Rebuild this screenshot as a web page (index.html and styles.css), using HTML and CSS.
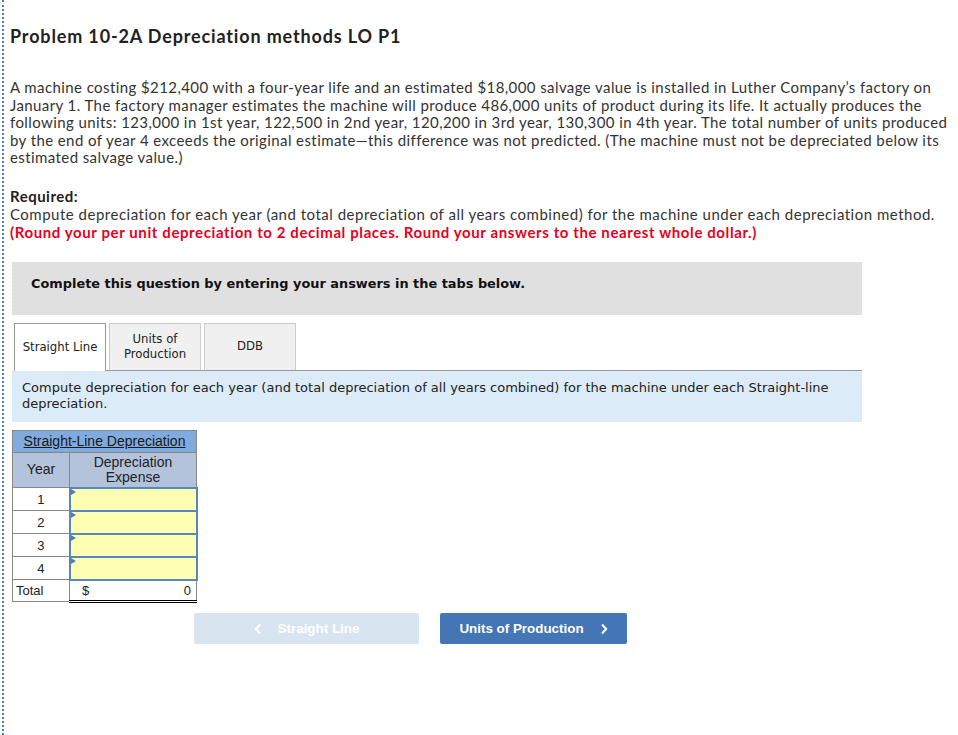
FILE: index.html
```html
<!DOCTYPE html>
<html>
<head>
<meta charset="utf-8">
<link rel="stylesheet" href="styles.css">
</head>
<body>
<div class="page">
  <h1 class="title">Problem 10-2A Depreciation methods LO P1</h1>
  <p class="intro">A machine costing $212,400 with a four-year life and an estimated $18,000 salvage value is installed in Luther Company’s factory on January 1. The factory manager estimates the machine will produce 486,000 units of product during its life. It actually produces the following units: 123,000 in 1st year, 122,500 in 2nd year, 120,200 in 3rd year, 130,300 in 4th year. The total number of units produced by the end of year 4 exceeds the original estimate—this difference was not predicted. (The machine must not be depreciated below its estimated salvage value.)</p>
  <div class="required">
    <div class="req-label">Required:</div>
    <div>Compute depreciation for each year (and total depreciation of all years combined) for the machine under each depreciation method.</div>
    <div class="red">(Round your per unit depreciation to 2 decimal places. Round your answers to the nearest whole dollar.)</div>
  </div>
  <div class="instructions">Complete this question by entering your answers in the tabs below.</div>
  <div class="tabs">
    <div class="tab active">Straight Line</div>
    <div class="tab">Units of<br>Production</div>
    <div class="tab">DDB</div>
  </div>
  <div class="tab-info">Compute depreciation for each year (and total depreciation of all years combined) for the machine under each Straight-line depreciation.</div>
  <table class="sheet">
    <tr><th colspan="2" class="cap"><u>Straight-Line Depreciation</u></th></tr>
    <tr><th class="hyear">Year</th><th class="hexp">Depreciation<br>Expense</th></tr>
    <tr><td class="yr">1</td><td class="inp"><span class="flag"></span></td></tr>
    <tr><td class="yr">2</td><td class="inp"><span class="flag"></span></td></tr>
    <tr><td class="yr">3</td><td class="inp"><span class="flag"></span></td></tr>
    <tr><td class="yr">4</td><td class="inp"><span class="flag"></span></td></tr>
    <tr><td class="tot">Total</td><td class="totv"><span>$</span><span>0</span></td></tr>
  </table>
  <div class="nav">
    <div class="btn prev"><svg class="chev" width="8" height="12" viewBox="0 0 8 12"><path d="M6 1.5 L1.8 6 L6 10.5" fill="none" stroke="#fff" stroke-width="2"/></svg>Straight Line</div>
    <div class="btn next">Units of Production<svg class="chev" width="8" height="12" viewBox="0 0 8 12"><path d="M2 1.5 L6.2 6 L2 10.5" fill="none" stroke="#fff" stroke-width="2"/></svg></div>
  </div>
</div>
</body>
</html>
```
FILE: styles.css
```css
html, body { margin: 0; padding: 0; background: #fff; }
.page {
  margin-left: 2px;
  border-left: 2px dotted #4a7ebb;
  min-height: 735px;
  padding-left: 6px;
  box-sizing: border-box;
  font-family: Lato, "Liberation Sans", sans-serif;
  color: #333;
}
.title {
  margin: 0;
  padding-top: 25px;
  font-size: 18px;
  line-height: 22px;
  font-weight: 700;
  letter-spacing: 0.85px;
  color: #222;
}
.intro {
  margin: 32px 0 0;
  font-size: 15px;
  line-height: 17.5px;
  letter-spacing: 0.41px;
  width: 940px;
}
.required {
  margin-top: 20px;
  font-size: 15px;
  line-height: 18px;
  letter-spacing: 0.5px;
}
.req-label { font-weight: 700; color: #222; }
.red { color: #e8001c; font-weight: 700; letter-spacing: 0.6px; }
.instructions {
  margin: 21px 0 0 2px;
  width: 850px;
  height: 53px;
  box-sizing: border-box;
  background: #e0e0e0;
  padding: 14px 0 0 19px;
  font-family: "DejaVu Sans", Verdana, sans-serif;
  font-size: 12.9px;
  font-weight: 700;
  color: #111;
}
.tabs {
  display: flex;
  gap: 3px;
  margin: 8px 0 0 4px;
  width: 848px;
  border-bottom: 1px solid #999;
  box-sizing: border-box;
}
.tab {
  width: 92px;
  height: 47px;
  box-sizing: border-box;
  border: 1px solid #ccc;
  border-bottom: none;
  background: #f0f0f0;
  display: flex;
  align-items: center;
  justify-content: center;
  text-align: center;
  font-family: "DejaVu Sans", Verdana, sans-serif;
  font-size: 11.7px;
  line-height: 15px;
  color: #222;
}
.tab.active { background: #fff; border-color: #999; margin-bottom: -1px; height: 48px; }
.tab-info {
  margin-left: 2px;
  width: 850px;
  height: 51px;
  box-sizing: border-box;
  background: #dcebf8;
  padding: 9px 10px 0;
  font-family: "DejaVu Sans", Verdana, sans-serif;
  font-size: 13px;
  line-height: 16px;
  color: #222;
}
.sheet {
  margin: 8px 0 0 2px;
  border-collapse: collapse;
  font-family: "Liberation Sans", Arial, sans-serif;
  font-size: 13px;
  color: #222;
  border: 1px solid #999;
}
.sheet th, .sheet td { padding: 0; border: 1px solid #888; }
.cap {
  background: #7fabde;
  height: 21px;
  font-weight: normal;
  font-size: 14px;
  color: #1a1a1a;
}
.hyear, .hexp {
  background: #b3c3dc;
  font-weight: normal;
  height: 34px;
  line-height: 15px;
  font-size: 14px;
}
.hyear { width: 56px; }
.hexp { width: 126px; }
.yr { height: 22px; text-align: center; background: #fff; font-size: 13px; }
.inp {
  background: #ffffb3;
  border: 2px solid #5a86c0 !important;
  position: relative;
  height: 20px;
}
.flag {
  position: absolute;
  left: 0;
  top: 0;
  width: 0; height: 0;
  border-top: 3px solid transparent;
  border-bottom: 3px solid transparent;
  border-left: 5px solid #4a7ebb;
}
.tot { height: 21px; padding-left: 3px !important; }
.totv {
  border-top: 2px solid #000 !important;
  border-bottom: 3px double #000 !important;
  padding: 0 5px 0 12px !important;
}
.totv span:first-child { float: left; }
.totv span:last-child { float: right; }
.nav {
  display: flex;
  gap: 21px;
  margin: 10px 0 0 184px;
}
.btn {
  height: 31px;
  border-radius: 2px;
  display: flex;
  align-items: center;
  justify-content: center;
  font-family: "Liberation Sans", Arial, sans-serif;
  font-weight: 700;
  font-size: 13.4px;
  color: #fff;
}
.prev { width: 225px; background: #d9e4f1; }
.next { width: 187px; background: #4475b5; }
.prev .chev { margin-right: 16px; }
.next .chev { margin-left: 16px; }
```
